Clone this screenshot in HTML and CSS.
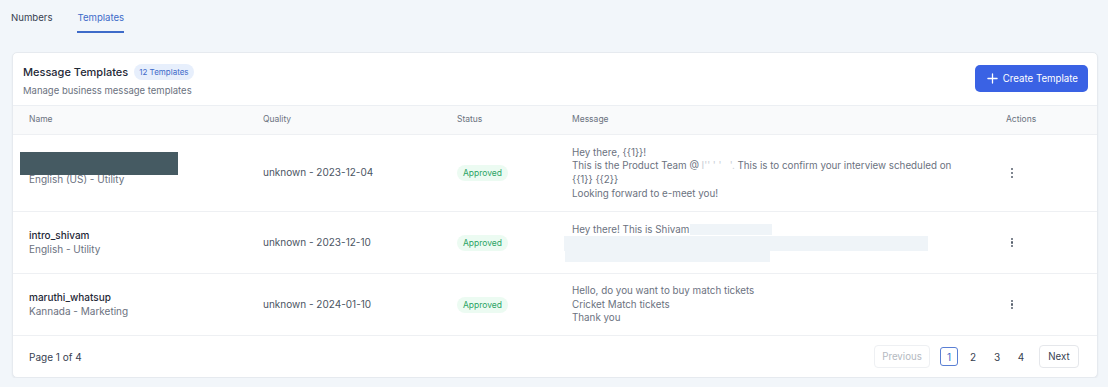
FILE: index.html
```html
<!DOCTYPE html>
<html lang="en">
<head>
    <meta charset="UTF-8">
    <meta name="viewport" content="width=device-width, initial-scale=1.0">
    <title>Message Templates</title>
    <link rel="stylesheet" href="styles.css">
</head>
<body>
    <nav class="tabs">
        <a class="tab">Numbers</a>
        <a class="tab active">Templates</a>
    </nav>

    <section class="card">
        <div class="card-head">
            <div>
                <div class="title-row">
                    <h2>Message Templates</h2>
                    <span class="count">12 Templates</span>
                </div>
                <p class="subtitle">Manage business message templates</p>
            </div>
            <button class="create-btn">
                <svg width="11" height="11" viewBox="0 0 12 12"><path d="M6 1v10M1 6h10" stroke="#fff" stroke-width="1.4" stroke-linecap="round"/></svg>
                Create Template
            </button>
        </div>

        <div class="table">
            <div class="row head">
                <div class="cell">Name</div>
                <div class="cell">Quality</div>
                <div class="cell">Status</div>
                <div class="cell">Message</div>
                <div class="cell">Actions</div>
            </div>

            <div class="row tall">
                <div class="cell">
                    <div class="name">
                        <div class="redact"></div>
                        <div class="sub">English (US) - Utility</div>
                    </div>
                </div>
                <div class="cell quality">unknown - 2023-12-04</div>
                <div class="cell"><span class="badge">Approved</span></div>
                <div class="cell">
                    <div class="msg">
                        Hey there, {{1}}!<br>
                        This is the Product Team @ <span class="faint">I'' ' ' &nbsp; '.</span> This is to confirm your interview scheduled on<br>
                        {{1}} {{2}}<br>
                        Looking forward to e-meet you!
                    </div>
                </div>
                <div class="cell"><span class="kebab"><i></i><i></i><i></i></span></div>
            </div>

            <div class="row">
                <div class="cell">
                    <div class="name">
                        <div class="main">intro_shivam</div>
                        <div class="sub">English - Utility</div>
                    </div>
                </div>
                <div class="cell quality">unknown - 2023-12-10</div>
                <div class="cell"><span class="badge">Approved</span></div>
                <div class="cell">
                    <div class="msg">
                        <div class="msg-line">Hey there! This is Shivam <span class="blank b1"></span></div>
                        <div class="blank b2"></div>
                        <div class="blank b3"></div>
                    </div>
                </div>
                <div class="cell"><span class="kebab"><i></i><i></i><i></i></span></div>
            </div>

            <div class="row">
                <div class="cell">
                    <div class="name">
                        <div class="main">maruthi_whatsup</div>
                        <div class="sub">Kannada - Marketing</div>
                    </div>
                </div>
                <div class="cell quality">unknown - 2024-01-10</div>
                <div class="cell"><span class="badge">Approved</span></div>
                <div class="cell">
                    <div class="msg">
                        Hello, do you want to buy match tickets<br>
                        Cricket Match tickets<br>
                        Thank you
                    </div>
                </div>
                <div class="cell"><span class="kebab"><i></i><i></i><i></i></span></div>
            </div>
        </div>

        <div class="card-foot">
            <span class="page-info">Page 1 of 4</span>
            <div class="pager">
                <button class="pg-btn prev" disabled>Previous</button>
                <div class="pages">
                    <span class="pg current">1</span>
                    <span class="pg">2</span>
                    <span class="pg">3</span>
                    <span class="pg">4</span>
                </div>
                <button class="pg-btn next">Next</button>
            </div>
        </div>
    </section>
</body>
</html>
```

FILE: styles.css
```css
body {
    margin: 0;
    padding: 0 10px 0 12px;
    background: #f2f6fa;
    color: #1f2937;
    font-family: Inter, 'Noto Sans', sans-serif;
    font-size: 10px;
}

.tabs {
    display: flex;
    gap: 25px;
    margin-left: -1px;
    padding-top: 11px;
}

.tab {
    font-size: 9.6px;
    line-height: 14px;
    padding-bottom: 6px;
    color: #374151;
    border-bottom: 2px solid transparent;
}

.tab.active {
    color: #3e6bc9;
    border-bottom-color: #3e6bc9;
}

.card {
    margin-top: 19px;
    background: #fff;
    border: 1px solid #e6eaef;
    border-radius: 5px;
    box-shadow: 0 1px 2px rgba(15, 23, 42, 0.06);
}

.card-head {
    display: flex;
    justify-content: space-between;
    align-items: flex-start;
    padding: 11px 9px 7px 10px;
    border-bottom: 1px solid #eceff3;
}

.title-row {
    display: flex;
    align-items: center;
    gap: 6px;
    height: 16px;
}

h2 {
    margin: 0;
    font-size: 11px;
    font-weight: 500;
    color: #1f2937;
}

.count {
    background: #e7effc;
    color: #3e6bc9;
    font-size: 8px;
    padding: 3px 5px;
    border-radius: 8px;
    line-height: 10px;
}

.subtitle {
    margin: 4px 0 0;
    font-size: 9.5px;
    line-height: 14px;
    color: #6b7280;
}

.create-btn {
    display: flex;
    align-items: center;
    gap: 5px;
    margin-top: 1px;
    height: 27px;
    padding: 0 10px 0 12px;
    background: #3a62e4;
    color: #fff;
    border: none;
    border-radius: 5px;
    font-family: inherit;
    font-size: 9.7px;
}

.row {
    display: grid;
    grid-template-columns: 234px 194px 115px 434px 107px;
    height: 62px;
    box-sizing: border-box;
    border-bottom: 1px solid #eef0f3;
    line-height: 13.6px;
}

.row.tall {
    height: 77px;
}

.row.head {
    height: 29px;
    background: #f9fafb;
    color: #6b7280;
    font-size: 8.5px;
}

.cell {
    display: flex;
    align-items: center;
    padding-left: 16px;
}

.name .main {
    color: #1f2937;
    font-weight: 500;
}

.name .sub {
    color: #6b7280;
}

.redact {
    width: 158px;
    height: 23px;
    margin: -7px 0 -2px -9px;
    background: #455a62;
}

.quality {
    color: #4b5563;
}

.badge {
    background: #ecfbf2;
    color: #2aa464;
    font-size: 8.5px;
    line-height: 10px;
    padding: 3px 6px;
    border-radius: 8px;
}

.msg {
    color: #6b7280;
    font-size: 9.8px;
}

.faint {
    color: #c9ced6;
}

.msg-line {
    display: flex;
    align-items: center;
}

.blank {
    background: #eff4f8;
}

.b1 {
    width: 82px;
    height: 11px;
    margin-left: 1px;
}

.b2 {
    width: 364px;
    height: 15px;
    margin-left: -8px;
}

.b3 {
    width: 205px;
    height: 11px;
    margin-left: -7px;
}

.kebab {
    display: flex;
    flex-direction: column;
    gap: 1.7px;
    margin-left: 5px;
}

.kebab i {
    width: 2.2px;
    height: 2.2px;
    border-radius: 1px;
    background: #555e6b;
}

.card-foot {
    display: flex;
    justify-content: space-between;
    align-items: center;
    height: 41px;
    padding: 0 18px 0 16px;
}

.page-info {
    color: #374151;
}

.pager {
    display: flex;
    align-items: center;
}

.pg-btn {
    height: 23px;
    background: #fff;
    border: 1px solid #e5e7eb;
    border-radius: 4px;
    font-family: inherit;
    font-size: 9.7px;
    color: #374151;
}

.pg-btn.prev {
    width: 56px;
    padding: 0;
}

.pg-btn.next {
    width: 40px;
    padding: 0;
}

.pg-btn:disabled {
    color: #b4b9c1;
    border-color: #eef0f3;
}

.pages {
    display: flex;
    gap: 6px;
    margin: 0 9px 0 10px;
}

.pg {
    width: 18px;
    height: 19px;
    display: flex;
    align-items: center;
    justify-content: center;
    color: #374151;
    border: 1px solid transparent;
    border-radius: 3px;
    box-sizing: border-box;
}

.pg.current {
    border-color: #5a7fd4;
    color: #3e6bc9;
}
```
